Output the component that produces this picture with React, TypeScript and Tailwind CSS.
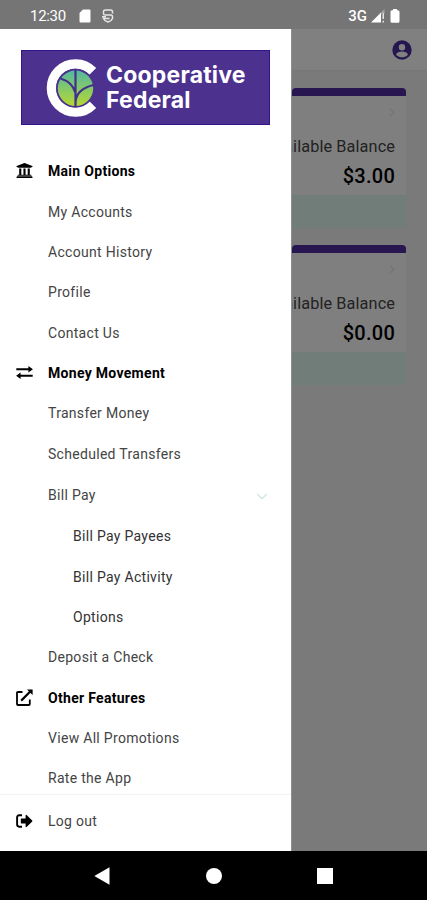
import type { ReactNode } from "react";
import { FaUniversity } from "react-icons/fa";

type Item = {
  label: string;
  kind: "heading" | "link" | "parent" | "child";
  icon?: ReactNode;
};

function ExchangeIcon() {
  return (
    <svg viewBox="0 0 17 13" className="w-[17px] h-[13px]">
      <path d="M0.3 3.3H13M4 9.7H16.7" stroke="#000" strokeWidth="2" />
      <path d="M12.4 0L16.9 3.3L12.4 6.6ZM4.6 6.4L0.1 9.7L4.6 13Z" />
    </svg>
  );
}

function ExternalIcon() {
  return (
    <svg viewBox="0 0 17 17" className="w-[17px] h-[17px]">
      <path
        d="M6.5 3H1.9Q1 3 1 3.9V15Q1 16 2 16H12.8Q13.8 16 13.8 15V10.5"
        fill="none"
        stroke="#000"
        strokeWidth="1.8"
      />
      <path d="M5.2 11.6L14.5 2.3" stroke="#000" strokeWidth="2.2" />
      <path d="M11 0.4H16.6V6Z" />
    </svg>
  );
}

function LogoutIcon() {
  return (
    <svg viewBox="0 0 17 14" className="w-[17px] h-[14px]">
      <path
        d="M6 1.3H3.2Q1.1 1.3 1.1 3.4V10.6Q1.1 12.7 3.2 12.7H6"
        fill="none"
        stroke="#000"
        strokeWidth="1.9"
      />
      <path d="M5.4 4.6H9.6V1.2Q9.8 0.4 10.6 1L16.2 6.4Q16.7 7 16.2 7.6L10.6 13Q9.8 13.6 9.6 12.8V9.4H5.4Q4.8 9.4 4.8 8.8V5.2Q4.8 4.6 5.4 4.6Z" />
    </svg>
  );
}

const items: Item[] = [
  {
    label: "Main Options",
    kind: "heading",
    icon: <FaUniversity className="w-[17px] h-[17px]" />,
  },
  { label: "My Accounts", kind: "link" },
  { label: "Account History", kind: "link" },
  { label: "Profile", kind: "link" },
  { label: "Contact Us", kind: "link" },
  { label: "Money Movement", kind: "heading", icon: <ExchangeIcon /> },
  { label: "Transfer Money", kind: "link" },
  { label: "Scheduled Transfers", kind: "link" },
  { label: "Bill Pay", kind: "parent" },
  { label: "Bill Pay Payees", kind: "child" },
  { label: "Bill Pay Activity", kind: "child" },
  { label: "Options", kind: "child" },
  { label: "Deposit a Check", kind: "link" },
  { label: "Other Features", kind: "heading", icon: <ExternalIcon /> },
  { label: "View All Promotions", kind: "link" },
  { label: "Rate the App", kind: "link" },
];

const rowStyles = {
  heading: "h-[40.3px] font-bold text-black",
  link: "h-[40.3px] text-[#444]",
  parent: "h-[42.5px] text-[#444]",
  child: "h-[40.3px] pl-[25px] text-[#333]",
};

function StatusBar() {
  return (
    <div className="flex items-center h-[29px] pl-[30px] pr-[27px] pt-[3px] bg-[#757575] text-white shrink-0">
      <span className="text-[15px] w-[49px] tracking-[-0.3px]">12:30</span>
      <svg viewBox="0 0 12 14" className="w-3 h-[14px]" fill="#fff">
        <path d="M4 0.5H10.5Q11.5 0.5 11.5 1.5V12.5Q11.5 13.5 10.5 13.5H1.5Q0.5 13.5 0.5 12.5V4Z" />
      </svg>
      <svg
        viewBox="0 0 12 14"
        className="w-3 h-[14px] ml-[11px]"
        fill="none"
        stroke="#e6e6e6"
        strokeWidth="1.5"
      >
        <path d="M10.5 4.5V2.8Q10.5 1 8.7 1H3.3Q1.5 1 1.5 2.8V4.4Q1.5 6 3.3 6H8.7Q10.5 6 10.5 7.8V9.4Q9.5 12 6 13Q2.5 12 1.5 9.4H7.5M0 7.7H4" />
      </svg>
      <span className="ml-auto text-[15px] font-medium">3G</span>
      <svg viewBox="0 0 14 14" className="w-[14px] h-[14px] ml-1" fill="#fff">
        <path d="M0 13.5L10 3.5V13.5Z" />
        <path d="M10 3.5L13.5 0V5H10Z" opacity=".35" />
        <path d="M11.5 4.5H13V10H11.5ZM11.5 11.8H13V13.5H11.5Z" opacity=".8" />
      </svg>
      <svg viewBox="0 0 10 14" className="w-[10px] h-[14px] ml-[5px]" fill="#fff">
        <path d="M3 0H7V1.2H8Q9.5 1.2 9.5 2.7V12.3Q9.5 13.8 8 13.8H2Q0.5 13.8 0.5 12.3V2.7Q0.5 1.2 2 1.2H3Z" />
      </svg>
    </div>
  );
}

function Logo() {
  return (
    <div className="flex items-center h-[75px] w-[249px] bg-[#4c318f] border border-[#32148a]">
      <svg viewBox="0 0 53 58" className="w-[53px] h-[58px] ml-[24px] shrink-0">
        <defs>
          <linearGradient id="leaf" x1="0" y1="0" x2="0" y2="1">
            <stop offset="0" stopColor="#55b8a0" />
            <stop offset="1" stopColor="#b5d832" />
          </linearGradient>
        </defs>
        <path
          d="M46.8 12.4A24 24 0 1 0 46.8 45.6"
          fill="none"
          stroke="#fff"
          strokeWidth="9.5"
        />
        <circle cx="29.5" cy="29.3" r="19.5" fill="#4c318f" />
        <circle cx="29.5" cy="29.3" r="17.7" fill="url(#leaf)" />
        <path
          d="M29.5 10V48M29.5 34Q26.5 23 14.5 19.5M29.5 43Q30.5 30 47.5 26"
          fill="none"
          stroke="#43308c"
          strokeWidth="2.2"
        />
      </svg>
      <div className="ml-[7px] font-['Inter',sans-serif] font-bold text-[23px] leading-[24.5px] tracking-[0.2px] text-white">
        <p>Cooperative</p>
        <p>Federal</p>
      </div>
    </div>
  );
}

function Drawer() {
  return (
    <div className="flex flex-col w-[291px] h-full bg-white pt-[21px] shrink-0 text-[14px] tracking-[0.3px]">
      <div className="pl-[21px] pb-[26.8px]">
        <Logo />
      </div>
      <ul className="grow min-h-0 overflow-hidden">
        {items.map((item) => (
          <li
            key={item.label}
            className={`flex items-center ${rowStyles[item.kind]}`}
          >
            <span className="flex w-[48px] pl-4 pb-[2px] shrink-0">
              {item.icon}
            </span>
            <span>{item.label}</span>
            {item.kind === "parent" && (
              <svg
                viewBox="0 0 12 7"
                className="w-3 h-[7px] ml-auto mr-[23px] mt-[2px]"
                fill="none"
                stroke="#d5eae6"
                strokeWidth="1.6"
              >
                <path d="M1 1L6 5.6L11 1" />
              </svg>
            )}
          </li>
        ))}
      </ul>
      <div className="flex items-center h-[57px] border-t border-[#f3f3f3] pb-[3px] text-[#444] shrink-0">
        <span className="w-[48px] pl-4 pb-[2px]">
          <LogoutIcon />
        </span>
        <span>Log out</span>
      </div>
    </div>
  );
}

function AccountCard({ balance }: { balance: string }) {
  return (
    <div className="flex flex-col h-[140px] w-[114px] rounded-t-[4px] bg-[#7f7f7f] border-t-[8px] border-[#281650] overflow-hidden text-right">
      <div className="flex justify-end pr-[11px] pt-[12px]">
        <svg
          viewBox="0 0 6 9"
          className="w-[6px] h-[9px]"
          fill="none"
          stroke="#6f7877"
          strokeWidth="1.3"
        >
          <path d="M1 1L5 4.5L1 8" />
        </svg>
      </div>
      <div className="flex justify-end pr-[11px] mt-[17.5px] text-[16.3px] leading-[24px] tracking-[0.1px] text-[#222] whitespace-nowrap">
        Available Balance
      </div>
      <p className="pr-[11px] mt-[3.5px] text-[20px] leading-[28px] font-medium tracking-[0.25px] text-black">
        {balance}
      </p>
      <div className="h-[33px] mt-auto bg-[#707d79] shrink-0" />
    </div>
  );
}

function App() {
  return (
    <div className="flex flex-col w-[427px] h-[900px] overflow-hidden bg-[#7a7a7a] font-['Roboto',sans-serif]">
      <StatusBar />
      <div className="flex h-[822px]">
        <Drawer />
        <div className="grow overflow-hidden border-l border-[#8e8e8e]">
          <div className="flex items-center justify-end h-[42px] pr-[15px] bg-[#808080] border-b border-[#777]">
            <svg viewBox="0 0 20 20" className="w-5 h-5">
              <circle cx="10" cy="10" r="9.7" fill="#251650" />
              <circle cx="10" cy="7.2" r="3.2" fill="#808080" />
              <path
                d="M4 14.4Q5.6 11.6 10 11.6Q14.4 11.6 16 14.4Q14 17.2 10 17.2Q6 17.2 4 14.4Z"
                fill="#808080"
              />
            </svg>
          </div>
          <div className="flex flex-col gap-[17px] pt-[17px]">
            <AccountCard balance="$3.00" />
            <AccountCard balance="$0.00" />
          </div>
        </div>
      </div>
      <div className="flex items-center h-[49px] bg-black shrink-0">
        <svg viewBox="0 0 16 18" className="w-4 h-[18px] ml-[94px]">
          <path d="M15.5 0.3V17.7L0.3 9Z" fill="#fff" />
        </svg>
        <div className="w-4 h-4 ml-24 rounded-full bg-white" />
        <div className="w-4 h-4 ml-[95px] bg-white" />
      </div>
    </div>
  );
}

export default App;
